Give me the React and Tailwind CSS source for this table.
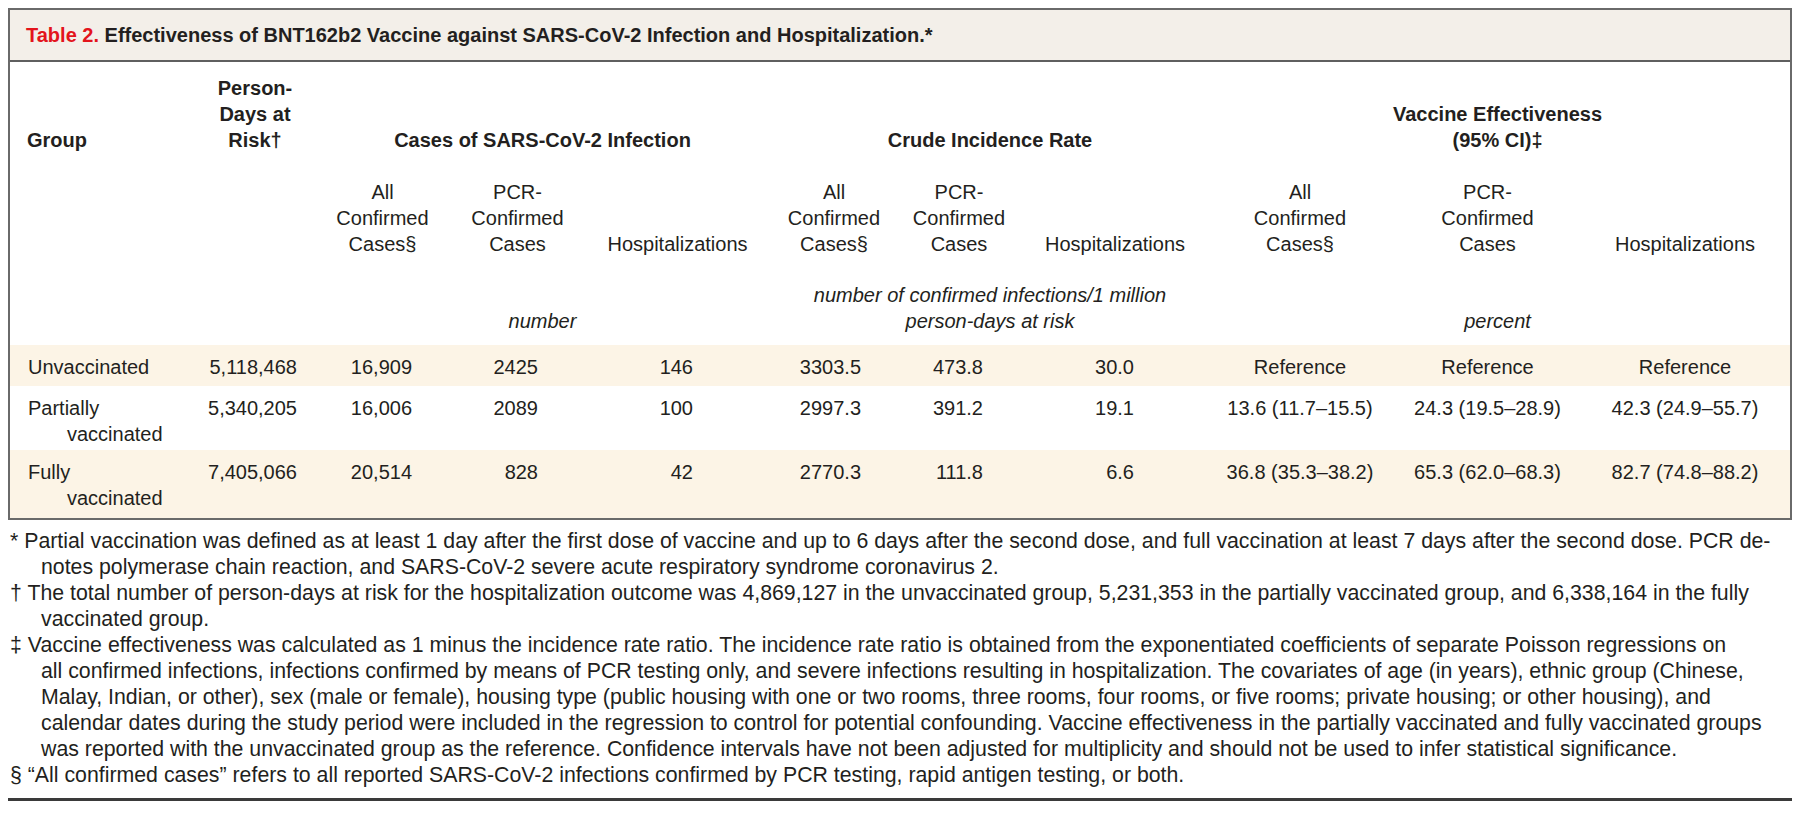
import React from 'react';

const rows = [
    {
        group: ['Unvaccinated'],
        band: true,
        h: 'h-[41px]',
        vals: ['5,118,468', '16,909', '2425', '146', '3303.5', '473.8', '30.0'],
        ve: ['Reference', 'Reference', 'Reference'],
    },
    {
        group: ['Partially', 'vaccinated'],
        band: false,
        h: 'h-[64px]',
        vals: ['5,340,205', '16,006', '2089', '100', '2997.3', '391.2', '19.1'],
        ve: ['13.6 (11.7–15.5)', '24.3 (19.5–28.9)', '42.3 (24.9–55.7)'],
    },
    {
        group: ['Fully', 'vaccinated'],
        band: true,
        h: 'h-[68px]',
        vals: ['7,405,066', '20,514', '828', '42', '2770.3', '111.8', '6.6'],
        ve: ['36.8 (35.3–38.2)', '65.3 (62.0–68.3)', '82.7 (74.8–88.2)'],
    },
];

// right padding of each numeric column so the figures line up like the print table
const numPad = ['pr-[13px]', 'pr-[43px]', 'pr-[42px]', 'pr-[82px]', 'pr-[32px]', 'pr-[42px]', 'pr-[71px]'];

const footnotes = [
    {
        sym: '*',
        lines: [
            'Partial vaccination was defined as at least 1 day after the first dose of vaccine and up to 6 days after the second dose, and full vaccination at least 7 days after the second dose. PCR de-',
            'notes polymerase chain reaction, and SARS-CoV-2 severe acute respiratory syndrome coronavirus 2.',
        ],
    },
    {
        sym: '†',
        lines: [
            'The total number of person-days at risk for the hospitalization outcome was 4,869,127 in the unvaccinated group, 5,231,353 in the partially vaccinated group, and 6,338,164 in the fully',
            'vaccinated group.',
        ],
    },
    {
        sym: '‡',
        lines: [
            'Vaccine effectiveness was calculated as 1 minus the incidence rate ratio. The incidence rate ratio is obtained from the exponentiated coefficients of separate Poisson regressions on',
            'all confirmed infections, infections confirmed by means of PCR testing only, and severe infections resulting in hospitalization. The covariates of age (in years), ethnic group (Chinese,',
            'Malay, Indian, or other), sex (male or female), housing type (public housing with one or two rooms, three rooms, four rooms, or five rooms; private housing; or other housing), and',
            'calendar dates during the study period were included in the regression to control for potential confounding. Vaccine effectiveness in the partially vaccinated and fully vaccinated groups',
            'was reported with the unvaccinated group as the reference. Confidence intervals have not been adjusted for multiplicity and should not be used to infer statistical significance.',
        ],
    },
    {
        sym: '§',
        lines: ['“All confirmed cases” refers to all reported SARS-CoV-2 infections confirmed by PCR testing, rapid antigen testing, or both.'],
    },
];

const App = () => {
    return (
        <div className="min-h-screen bg-white pt-[8px] pl-[8px] text-[#231f20] font-['Liberation_Sans',Arial,sans-serif]">
            <div className="w-[1784px]">
                {/* Table box */}
                <div className="border-2 border-[#6a6a6a]">
                    {/* Title bar */}
                    <div className="h-[52px] bg-[#f3efe9] border-b-2 border-[#5f5f5f] pl-[16px] text-[20px] leading-[50px] font-bold">
                        <span className="text-[#e3141c]">Table 2.</span> Effectiveness of BNT162b2 Vaccine against SARS-CoV-2 Infection and Hospitalization.*
                    </div>

                    <table className="w-[1780px] table-fixed border-collapse text-[20px] leading-[26px]">
                        <colgroup>
                            <col className="w-[190px]" />
                            <col className="w-[110px]" />
                            <col className="w-[145px]" />
                            <col className="w-[125px]" />
                            <col className="w-[195px]" />
                            <col className="w-[118px]" />
                            <col className="w-[132px]" />
                            <col className="w-[180px]" />
                            <col className="w-[190px]" />
                            <col className="w-[185px]" />
                            <col className="w-[210px]" />
                        </colgroup>
                        <thead>
                            <tr className="align-bottom">
                                <th className="pt-[13px] pb-[13px] pl-[17px] text-left font-bold">Group</th>
                                <th className="pt-[13px] pb-[13px] text-center font-bold">
                                    Person-<br />Days at<br />Risk†
                                </th>
                                <th colSpan={3} className="pt-[13px] pb-[13px] text-center font-bold">
                                    Cases of SARS-CoV-2 Infection
                                </th>
                                <th colSpan={3} className="pt-[13px] pb-[13px] text-center font-bold">
                                    Crude Incidence Rate
                                </th>
                                <th colSpan={3} className="pt-[13px] pb-[13px] text-center font-bold">
                                    Vaccine Effectiveness<br />(95% CI)‡
                                </th>
                            </tr>
                            <tr className="align-bottom">
                                <th />
                                <th />
                                <th className="pt-[13px] pb-[12px] text-center font-normal">All<br />Confirmed<br />Cases§</th>
                                <th className="pt-[13px] pb-[12px] text-center font-normal">PCR-<br />Confirmed<br />Cases</th>
                                <th className="pt-[13px] pb-[12px] text-center font-normal">Hospitalizations</th>
                                <th className="pt-[13px] pb-[12px] text-center font-normal">All<br />Confirmed<br />Cases§</th>
                                <th className="pt-[13px] pb-[12px] text-center font-normal">PCR-<br />Confirmed<br />Cases</th>
                                <th className="pt-[13px] pb-[12px] text-center font-normal">Hospitalizations</th>
                                <th className="pt-[13px] pb-[12px] text-center font-normal">All<br />Confirmed<br />Cases§</th>
                                <th className="pt-[13px] pb-[12px] text-center font-normal">PCR-<br />Confirmed<br />Cases</th>
                                <th className="pt-[13px] pb-[12px] text-center font-normal">Hospitalizations</th>
                            </tr>
                            <tr className="align-bottom italic">
                                <th />
                                <th />
                                <th colSpan={3} className="pt-[13px] pb-[11px] text-center font-normal">number</th>
                                <th colSpan={3} className="pt-[13px] pb-[11px] text-center font-normal">
                                    number of confirmed infections/1 million<br />person-days at risk
                                </th>
                                <th colSpan={3} className="pt-[13px] pb-[11px] text-center font-normal">percent</th>
                            </tr>
                        </thead>
                        <tbody>
                            {rows.map((r) => (
                                <tr key={r.group[0]} className={`${r.h} align-top ${r.band ? 'bg-[#fcf4e6]' : 'bg-white'}`}>
                                    <td className="pt-[9px] pl-[18px]">
                                        <div>{r.group[0]}</div>
                                        {r.group[1] && <div className="pl-[39px]">{r.group[1]}</div>}
                                    </td>
                                    {r.vals.map((v, i) => (
                                        <td key={i} className={`pt-[9px] text-right ${numPad[i]}`}>
                                            {v}
                                        </td>
                                    ))}
                                    {r.ve.map((v, i) => (
                                        <td key={i} className="pt-[9px] text-center">
                                            {v}
                                        </td>
                                    ))}
                                </tr>
                            ))}
                        </tbody>
                    </table>
                </div>

                {/* Footnotes */}
                <div className="mt-[8px] text-[21.3px] leading-[26px] whitespace-nowrap">
                    {footnotes.map((f) => (
                        <div key={f.sym} className="pl-[33px] -indent-[31px]">
                            {f.sym} {f.lines.map((l, i) => (
                                <React.Fragment key={i}>
                                    {i > 0 && <br />}
                                    {l}
                                </React.Fragment>
                            ))}
                        </div>
                    ))}
                </div>
                <div className="mt-[10px] border-t-[3px] border-[#3a3a3a]" />
            </div>
        </div>
    );
};

export default App;
